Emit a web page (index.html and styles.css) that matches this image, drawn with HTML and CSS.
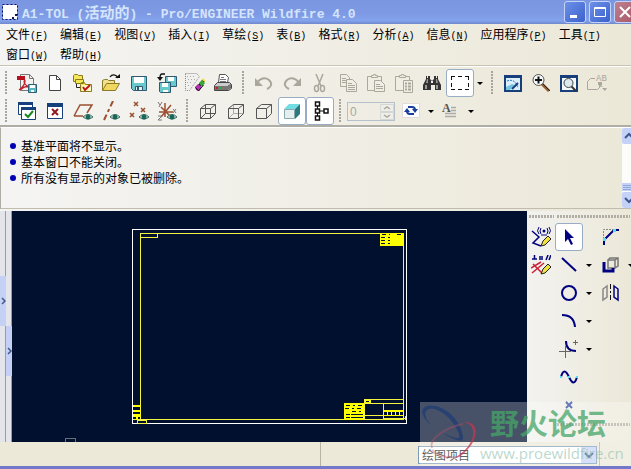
FILE: index.html
```html
<!DOCTYPE html>
<html lang="zh-CN">
<head>
    <meta charset="UTF-8">
    <meta name="viewport" content="width=device-width, initial-scale=1.0">
    <title>A1-TOL (活动的) - Pro/ENGINEER Wildfire 4.0</title>
    <link rel="stylesheet" href="styles.css">
</head>
<body>

<header class="titlebar">
    <svg class="app-icon" width="16" height="16" viewBox="0 0 16 16"><path fill="#fff" d="M1 1h14v14H1z"/><path fill="none" stroke="#101060" stroke-dasharray="2 2" d="M.5.5h15v15H.5z"/><path fill="#101060" d="M10 13h2v2h-2zM13 10h2v2h-2z"/></svg>
    <h1><span class="mono">A1-TOL (</span>活动的<span class="mono">) - Pro/ENGINEER Wildfire 4.0</span></h1>
    <div class="window-buttons">
        <button type="button" aria-label="最小化"><svg width="20" height="20" viewBox="0 0 20 20"><path fill="#fff" d="M5 13h7v3H5z"/></svg></button>
        <button type="button" aria-label="最大化"><svg width="20" height="20" viewBox="0 0 20 20"><path fill="none" stroke="#fff" d="M4.500 5.500h11v9h-11zM4.500 6.500h11"/></svg></button>
        <button type="button" class="close" aria-label="关闭"><svg width="20" height="20" viewBox="0 0 20 20"><path fill="none" stroke="#fff" stroke-width="2" d="M5 5l10 10M15 5L5 15"/></svg></button>
    </div>
</header>

<nav class="menubar">
    <a href="#">文件<span>(<u>F</u>)</span></a>
    <a href="#">编辑<span>(<u>E</u>)</span></a>
    <a href="#">视图<span>(<u>V</u>)</span></a>
    <a href="#">插入<span>(<u>I</u>)</span></a>
    <a href="#">草绘<span>(<u>S</u>)</span></a>
    <a href="#">表<span>(<u>B</u>)</span></a>
    <a href="#">格式<span>(<u>R</u>)</span></a>
    <a href="#">分析<span>(<u>A</u>)</span></a>
    <a href="#">信息<span>(<u>N</u>)</span></a>
    <a href="#">应用程序<span>(<u>P</u>)</span></a>
    <a href="#">工具<span>(<u>T</u>)</span></a>
    <a href="#">窗口<span>(<u>W</u>)</span></a>
    <a href="#">帮助<span>(<u>H</u>)</span></a>
</nav>

<div class="toolbars">
    <div class="toolbar">
        <i class="grip"></i>
        <button type="button" class="tool" aria-label="PDF"><svg viewBox="0 0 20 20"><path fill="#f4f0f0" stroke="#777" d="M3.500 1.500h9l4 4v12h-13z"/><path fill="none" stroke="#777" d="M12.500 1.500v4h4"/><path fill="#b8101c" d="M0 3h8v4H0z"/><path fill="none" stroke="#c02028" stroke-width="1.300" d="M2 17c4-3 6-7 6-9s-2 0 0 3 5 3 7 2-7-1-12 4"/><path fill="#58b8c0" stroke="#2c6074" d="M11.500 11.500h8v8h-8z"/><path fill="#fff" d="M13 12h5v3h-5zM14 17h3v2h-3z"/></svg></button>
        <button type="button" class="tool" aria-label="新建"><svg viewBox="0 0 20 20"><path fill="#fff" stroke="#444" d="M4.500 2.500h7l4 4v11h-11z"/><path fill="none" stroke="#444" d="M11.500 2.500v4h4"/></svg></button>
        <button type="button" class="tool" aria-label="设置工作目录"><svg viewBox="0 0 20 20"><path fill="#f4e858" stroke="#8a7a18" d="M.5 2.500l1-1h3l1 1h4v6h-9z"/><path fill="none" stroke="#222" d="M3.500 9v5.500h4"/><path fill="#f4e858" stroke="#8a7a18" d="M2.500 6.500h8v4h-8zM7.500 11.500l1-2h3l1 2h6v7h-11z"/><path fill="#fff8c0" d="M9 12h9v6H9z"/><path fill="none" stroke="#c01818" stroke-width="2" d="M10 14l2 3 5-5"/></svg></button>
        <button type="button" class="tool" aria-label="打开"><svg viewBox="0 0 20 20"><path fill="#f0e090" stroke="#8a7a28" d="M1.500 17.500v-10l2-1h3l1 1h6v3"/><path fill="#f0d860" stroke="#8a7a28" d="M1.500 17.500l4-7h13l-4 7z"/><path fill="none" stroke="#111" stroke-width="1.300" d="M9 4c2-3 6-3 8 1"/><path fill="#111" d="M14 5h5V1z"/></svg></button>
        <button type="button" class="tool" aria-label="保存"><svg viewBox="0 0 20 20"><path fill="#68c8cc" stroke="#305870" d="M2.500 3.500h15v14h-13l-2-2z"/><path fill="#fff" d="M5 4h10v6H5z"/><path fill="#e8f4f4" stroke="#305870" d="M6.500 13.500h7v4h-7z"/><path fill="#305870" d="M8 14h2v3H8z"/></svg></button>
        <button type="button" class="tool" aria-label="保存副本"><svg viewBox="0 0 20 20"><path fill="#68c8cc" stroke="#305870" d="M8.500 3.500h11v10h-11z"/><path fill="#fff" d="M11 4h6v4h-6z"/><path fill="#68c8cc" stroke="#305870" d="M2.500 9.500h11v10h-10l-1-1z"/><path fill="#fff" d="M5 10h6v4H5zM6 17h5v2H6z"/><path fill="none" stroke="#111" stroke-width="1.300" d="M8 1H5Q3 1 3 5"/><path fill="#111" d="M0 4h6L3 8z"/></svg></button>
        <button type="button" class="tool" aria-label="拭除"><svg viewBox="0 0 20 20"><path fill="#f0f0ee" stroke="#888" stroke-dasharray="1 1" d="M.5.500h11l3 3-10 14h-4z"/><path stroke="#aaa" stroke-dasharray="1 2" d="M2 3.500h9M3 6.500h7M2 9.500h6M3 12.500h3"/><path fill="#111" d="M13 12l5-6 2 2-6 7z"/><path fill="#b030b0" d="M10 14l3-3 4 3-3 4-3-1z"/><path fill="#38a838" d="M14 10l3-3 3 3-3 4z"/><path fill="#f4e840" d="M17 7l1-2 2 2v2z"/><path fill="none" stroke="#111" d="M10.500 14.500l3 3.500 5-6"/></svg></button>
        <button type="button" class="tool" aria-label="打印"><svg viewBox="0 0 20 20"><path fill="#fff" stroke="#555" d="M5.500 9.500l1-8h6l3 3-1 5z"/><path stroke="#777" d="M8 4.500h3M7 6.500h6M7 8.500h6"/><path fill="#ccc" stroke="#444" d="M1.500 12.500l3-3h12l2 2v4l-3 2h-14z"/><path fill="#777" d="M2 13h13v4H2zM15 12l3-1v4l-3 2z"/><path fill="#d02020" d="M3 14h2v2H3z"/><path fill="#30b030" d="M6 14h2v2H6z"/></svg></button>
        <i class="grip"></i>
        <button type="button" class="tool" aria-label="撤消" disabled><svg viewBox="0 0 20 20"><path fill="none" stroke="#aaa79c" stroke-width="2" d="M3 10c3-5 8-6 12-3 4 4 2 7-2 9"/><path fill="#aaa79c" d="M1 5v8h8z"/></svg></button>
        <button type="button" class="tool" aria-label="重做" disabled><svg viewBox="0 0 20 20"><path fill="none" stroke="#aaa79c" stroke-width="2" d="M17 10C14 5 9 4 5 7c-4 4-2 7 2 9"/><path fill="#aaa79c" d="M19 5v8h-8z"/></svg></button>
        <button type="button" class="tool" aria-label="剪切" disabled><svg viewBox="0 0 20 20"><path fill="none" stroke="#aaa79c" stroke-width="1.500" d="M6 1l5 12M13 1L8 13"/><ellipse cx="6.500" cy="15.500" rx="2" ry="3" fill="none" stroke="#aaa79c" stroke-width="1.500"/><ellipse cx="12.500" cy="15.500" rx="2" ry="3" fill="none" stroke="#aaa79c" stroke-width="1.500"/></svg></button>
        <button type="button" class="tool" aria-label="复制" disabled><svg viewBox="0 0 20 20"><path fill="#efede4" stroke="#aaa79c" d="M2.500 1.500h6l3 3v9h-9z"/><path stroke="#aaa79c" d="M4 5.500h4M4 7.500h5M4 9.500h5"/><path fill="#efede4" stroke="#aaa79c" d="M8.500 6.500h6l4 4v8h-10z"/><path stroke="#aaa79c" d="M10 10.500h4M10 12.500h7M10 14.500h7M10 16.500h7"/></svg></button>
        <button type="button" class="tool" aria-label="粘贴" disabled><svg viewBox="0 0 20 20"><path fill="#efede4" stroke="#aaa79c" d="M1.500 3.500h14v14h-14z"/><path fill="#efede4" stroke="#aaa79c" d="M5.500 4.500v-2h2v-1h2v1h2v2z"/><path fill="#efede4" stroke="#aaa79c" d="M8.500 7.500h6l4 4v7h-10z"/><path stroke="#aaa79c" d="M10 11.500h4M10 13.500h7M10 15.500h7"/></svg></button>
        <button type="button" class="tool" aria-label="选择性粘贴" disabled><svg viewBox="0 0 20 20"><path fill="#efede4" stroke="#aaa79c" d="M1.500 3.500h14v14h-14z"/><path fill="#efede4" stroke="#aaa79c" d="M5.500 4.500v-2h2v-1h2v1h2v2z"/><path fill="#efede4" stroke="#aaa79c" d="M9.500 7.500h9v12h-9z"/><path stroke="#aaa79c" stroke-width="2" d="M11 10.500h2M14 10.500h3M11 13.500h2M14 13.500h3M11 16.500h2M14 16.500h3"/></svg></button>
        <button type="button" class="tool" aria-label="查找"><svg viewBox="0 0 20 20"><path fill="#333" d="M4 3h4v3l2 2 2-2V3h4v3l3 6v5h-6v-5h-4v5H1v-5l3-6z"/><path fill="#999" d="M5 6h1v4H4zM14 6h1l1 4h-2zM3 12h2v4H3zM14 12h2v4h-2z"/><path fill="#eee" d="M5 3h1v2H5zM14 3h1v2h-1zM9 8h2v2H9z"/></svg></button>
        <button type="button" class="tool active" aria-label="选取"><svg viewBox="0 0 20 20"><path fill="none" stroke="#111" stroke-dasharray="4 3" d="M1 3.500h18M1 16.500h18M1.500 3v14M18.500 3v14"/></svg></button>
        <button type="button" class="drop" aria-label="选取选项"></button>
        <i class="grip"></i>
        <button type="button" class="tool" aria-label="重画"><svg viewBox="0 0 20 20"><path fill="#dceefa" stroke="#173f7b" stroke-width="2" d="M2 3h16v15H2z"/><path fill="#173f7b" d="M1 2h18v3H1z"/><path fill="#74c4e4" d="M3 14l6-3 3 1-5 5H3z"/><path fill="none" stroke="#2080c0" stroke-dasharray="2 1" d="M4 8c5-2 9 0 11 7"/><path fill="none" stroke="#173f7b" stroke-width="2" d="M9 16l6-6"/></svg></button>
        <button type="button" class="tool" aria-label="放大"><svg viewBox="0 0 20 20"><path stroke="#96602c" stroke-width="3" d="M11 11l7 7"/><path stroke="#222" d="M12 11l7 7"/><circle cx="7.500" cy="7" r="5.500" fill="#f4f8f8" stroke="#555"/><path stroke="#111" stroke-width="2" d="M4 7h7M7.500 3.500v7"/></svg></button>
        <button type="button" class="tool" aria-label="重新调整"><svg viewBox="0 0 20 20"><path fill="#f4f8fa" stroke="#173f7b" stroke-width="2" d="M2 3h16v15H2z"/><path fill="#173f7b" d="M1 2h18v3H1z"/><path stroke="#333" stroke-width="2" d="M12 13l5 5"/><circle cx="9.500" cy="10" r="4.500" fill="#dceaf0" stroke="#444"/></svg></button>
        <button type="button" class="tool" aria-label="保存的视图" disabled><svg viewBox="0 0 20 20"><path fill="none" stroke="#aaa79c" d="M8 5.500H3.500l-3 3v8h10l3-3V11M12.500 9v5M15.500 14l-2-2"/><path fill="#aaa79c" d="M11 9h4v3h-4zM15 15h5l-2 3z"/><text x="9" y="8" font-family="Liberation Mono" font-size="9" fill="#aaa79c">AB</text></svg></button>
    </div>
    <div class="toolbar">
        <i class="grip"></i>
        <button type="button" class="tool" aria-label="激活窗口"><svg viewBox="0 0 20 20"><path fill="#fff" stroke="#173f7b" d="M1.500 1.500h14v12h-14z"/><path fill="#173f7b" d="M1 1h15v3H1z"/><path fill="#fff" stroke="#173f7b" d="M4.500 6.500h14v12h-14z"/><path fill="#173f7b" d="M4 6h15v3H4z"/><path fill="none" stroke="#188820" stroke-width="2" d="M8 13l3 3 5-6"/></svg></button>
        <button type="button" class="tool" aria-label="关闭窗口"><svg viewBox="0 0 20 20"><path fill="#fff" stroke="#173f7b" d="M2.500 2.500h15v15h-15z"/><path fill="#173f7b" d="M2 2h16v4H2z"/><path fill="none" stroke="#901820" stroke-width="2" d="M7 8l6 6M13 8l-6 6"/></svg></button>
        <button type="button" class="tool" aria-label="基准平面"><svg viewBox="0 0 20 20"><path fill="none" stroke="#9a5030" stroke-width="1.500" d="M1 15L7 4h12l-5 8M1 15h9"/><path fill="#dce8e4" stroke="#386860" d="M10 16q5-5 10 0-5 4-10 0z"/><circle cx="15" cy="16" r="2.500" fill="#186858"/></svg></button>
        <button type="button" class="tool" aria-label="基准轴"><svg viewBox="0 0 20 20"><path fill="none" stroke="#9a5030" stroke-width="2" stroke-dasharray="6 3 3 3" d="M12 0L3 19"/><path fill="#dce8e4" stroke="#386860" d="M9 16q5-5 10 0-5 4-10 0z"/><circle cx="14" cy="16" r="2.500" fill="#186858"/></svg></button>
        <button type="button" class="tool" aria-label="基准点"><svg viewBox="0 0 20 20"><path fill="none" stroke="#9a5030" stroke-width="1.500" d="M5 1l4 4M9 1L5 5M1 12l4 4M5 12l-4 4M12 7l4 4M16 7l-4 4"/><path fill="#dce8e4" stroke="#386860" d="M10 16q5-5 10 0-5 4-10 0z"/><circle cx="15" cy="16" r="2.500" fill="#186858"/></svg></button>
        <button type="button" class="tool" aria-label="坐标系"><svg viewBox="0 0 20 20"><path fill="none" stroke="#9a5030" stroke-width="1.500" d="M8 2v14M2 11h14M4 6l10 10M14 4L4 16"/><path fill="none" stroke="#777" d="M1 1l2 3M5 1L2 6M16 8l3 4M19 8l-3 4M1 15h4l-4 4h4"/><path fill="#dce8e4" stroke="#386860" d="M10 16q5-5 10 0-5 4-10 0z"/><circle cx="15" cy="16" r="2.500" fill="#186858"/></svg></button>
        <i class="grip"></i>
        <button type="button" class="tool" aria-label="线框"><svg viewBox="0 0 20 20"><path fill="none" stroke="#555" d="M2.500 7.500h10v10h-10zM7.500 3.500h10v9h-10zM2.500 7.500l5-4M12.500 7.500l5-4M12.500 17.500l5-5M2.500 17.500l5-5"/></svg></button>
        <button type="button" class="tool" aria-label="隐藏线"><svg viewBox="0 0 20 20"><path fill="none" stroke="#aaa" d="M7.500 3.500v9h10M2.500 17.500l5-5"/><path fill="none" stroke="#555" d="M2.500 7.500h10v10h-10zM2.500 7.500l5-4h10v9l-5 5M12.500 7.500l5-4"/></svg></button>
        <button type="button" class="tool" aria-label="无隐藏线"><svg viewBox="0 0 20 20"><path fill="none" stroke="#555" d="M2.500 7.500h10v10h-10zM2.500 7.500l5-4h10v9l-5 5M12.500 7.500l5-4"/></svg></button>
        <button type="button" class="tool active" aria-label="着色"><svg viewBox="0 0 20 20"><path fill="#e4eeee" stroke="#8aa" d="M2.500 8.500h10v9h-10z"/><path fill="#70dce4" d="M2 8l5-5h11l-5 5z"/><path fill="#2c7880" d="M13 8l5-5v10l-5 5z"/></svg></button>
        <button type="button" class="tool active" aria-label="模型树"><svg viewBox="0 0 20 20"><path stroke="#111" d="M7.500 5v3M7.500 12v3M10 10h4"/><path fill="#fff" stroke="#111" stroke-width="1.500" d="M5.500 1h4v4h-4zM5.500 8h4v4h-4zM5.500 15h4v4h-4zM14 8h4v4h-4z"/></svg></button>
        <i class="grip"></i>
        <label class="spinner">
            <input type="number" value="0" aria-label="页面" disabled>
            <svg width="14" height="16" viewBox="0 0 14 16"><path fill="#efeee6" stroke="#d4d8d4" d="M.5.500h13v7H.5zM.5 8.500h13v7H.5z"/><path fill="none" stroke="#a8a8a0" stroke-width="1.500" d="M4 5l3-2 3 2M4 11l3 2 3-2"/></svg>
        </label>
        <button type="button" class="tool" aria-label="更新"><svg viewBox="0 0 20 20"><path fill="#fff" stroke="#ddd" d="M1.500 2.500h17v14h-17z"/><path fill="none" stroke="#173f9b" stroke-width="2" d="M7 6h4q3 0 3 3M13 13H9q-3 0-3-3"/><path fill="#173f9b" d="M11 8h6l-3 4zM3 11h6L6 7z"/></svg></button>
        <button type="button" class="drop" aria-label="更新选项"></button>
        <button type="button" class="tool" aria-label="文本样式" disabled><svg viewBox="0 0 20 20"><text x="1" y="11" font-family="Liberation Serif" font-size="12" font-weight="bold" fill="#555">A</text><path stroke="#aaa" stroke-width="1.500" d="M10 6.500h5M10 9.500h5M4 12.500h11M4 15.500h11"/></svg></button>
        <button type="button" class="drop" aria-label="文本样式选项"></button>
    </div>
</div>

<section class="messages">
    <ul>
        <li>基准平面将不显示。</li>
        <li>基本窗口不能关闭。</li>
        <li>所有没有显示的对象已被删除。</li>
    </ul>
    <div class="scrollbar">
        <button type="button" aria-label="向上"><svg width="16" height="16" viewBox="0 0 16 16"><path fill="none" stroke="#40588c" stroke-width="2" d="M3 10l4-4 4 4"/></svg></button>
        <i class="thumb"></i>
        <button type="button" aria-label="向下"><svg width="16" height="16" viewBox="0 0 16 16"><path fill="none" stroke="#40588c" stroke-width="2" d="M3 6l4 4 4-4"/></svg></button>
    </div>
</section>

<main class="workspace">
    <div class="splitter first"><button type="button" aria-label="展开导航器"><svg width="5" height="8" viewBox="0 0 5 8"><path fill="none" stroke="#40588c" stroke-width="1.500" d="M1 1l3 3-3 3"/></svg></button></div>
    <div class="splitter second"><button type="button" aria-label="展开浏览器"><svg width="5" height="8" viewBox="0 0 5 8"><path fill="none" stroke="#40588c" stroke-width="1.500" d="M1 1l3 3-3 3"/></svg></button></div>
    <div class="canvas">
        <svg viewBox="0 0 515 231" preserveAspectRatio="xMidYMid meet" shape-rendering="crispEdges" role="img" aria-label="A1">
            <!-- sheet border and frame -->
            <path fill="none" stroke="#fff" d="M120.500 18.500h274v194h-274z"/>
            <g fill="none" stroke="#f4f440">
                <path d="M128.500 22.500h263v186h-263zM128.500 22.500h17v4h-17z"/>
                <path d="M125.500 209.500h9v3h-9zM121 208.500h8"/>
                <!-- title block -->
                <path d="M352.500 188.500h39v20h-39zM352.500 192.500h39M358.500 189v3M371.500 192v16M352.500 204.500h39M372 207.500h22M393.500 205v4"/>
            </g>
            <path fill="#ff0" d="M368 22h24v13h-24zM121 194h8v2h-8zM121 199h8v2h-8zM121 203h8v3h-8zM332 192h20v17h-20zM371 199h21v6h-21zM353 189h6v3h-6zM124 206h2v3h-2z"/>
            <path stroke="#00102e" stroke-dasharray="4 3 2 3" d="M370 23.500h8M385 23.500h6M369 26.500h10M369 29.500h10M369 32.500h10M334 194.500h18M333 197.500h18M340 200.500h12M334 203.500h17M334 206.500h17"/>
            <path stroke="#00102e" stroke-width="3" stroke-dasharray="3 1" d="M372 202.500h19"/>
            <path stroke="#00102e" d="M354 190.500h3M339 203.500h12M339 206.500h12"/>
            <path fill="none" stroke="#687078" d="M53.500 227.500h10v4h-10z"/>
        </svg>
    </div>
    <aside class="palette">
        <i class="grip-h"></i><i class="grip-h wide"></i>
        <div class="column">
            <button type="button" class="tool" aria-label="草绘参照"><svg viewBox="0 0 20 20"><path fill="none" stroke="#000080" stroke-width="1.500" d="M1 4l7 6-6 6 8 3"/><circle cx="13" cy="4" r="1.500" fill="#000080"/><path fill="none" stroke="#000080" d="M10 1q-2 3 0 6M16 1q2 3 0 6M8 0q-3 4 0 7M18 0q3 4 0 7M10 8h6"/><path fill="#f0e040" stroke="#222" d="M12 14l5-5 3 3-6 6-4 1z"/></svg></button>
            <button type="button" class="tool" aria-label="草绘约束"><svg viewBox="0 0 20 20"><path fill="none" stroke="#000080" stroke-width="1.500" d="M1 4h5M3.500 0v4M8 2h4M8 4h4M15 5l2-5M18 5l2-5"/><path fill="none" stroke="#c82038" stroke-width="1.500" d="M0 13L10 7M1 18L13 8M2 9l9 9"/><path fill="#f0e040" stroke="#222" d="M12 14l5-5 3 3-6 6-4 1z"/></svg></button>
        </div>
        <div class="column">
            <div class="entry"><button type="button" class="tool active" aria-label="选择"><svg viewBox="0 0 20 20"><path fill="#000080" d="M6 2v13l3-3 3 6 2-1-3-6h4z"/></svg></button></div>
            <div class="entry"><button type="button" class="tool" aria-label="线"><svg viewBox="0 0 20 20"><path stroke="#000080" stroke-width="2" d="M3 3l14 13"/></svg></button><button type="button" class="drop" aria-label="线选项"></button></div>
            <div class="entry"><button type="button" class="tool" aria-label="圆"><svg viewBox="0 0 20 20"><circle cx="10" cy="10" r="7" fill="none" stroke="#000080" stroke-width="2"/></svg></button><button type="button" class="drop" aria-label="圆选项"></button></div>
            <div class="entry"><button type="button" class="tool" aria-label="弧"><svg viewBox="0 0 20 20"><path fill="none" stroke="#000080" stroke-width="2" d="M3 4q12 0 13 12"/></svg></button><button type="button" class="drop" aria-label="弧选项"></button></div>
            <div class="entry"><button type="button" class="tool" aria-label="圆角"><svg viewBox="0 0 20 20"><path fill="none" stroke="#000080" stroke-width="2" d="M7 2q0 10 10 10"/><path stroke="#666" d="M0 12.500h12M6.500 7v12M14 3.500h5M16.500 1v5"/></svg></button><button type="button" class="drop" aria-label="圆角选项"></button></div>
            <div class="entry"><button type="button" class="tool" aria-label="样条"><svg viewBox="0 0 20 20"><path fill="none" stroke="#000080" stroke-width="2" d="M2 10q3-11 8 0t8 0"/><path fill="#50e0f0" d="M1 9h2v2H1zM9 9h2v2H9zM17 9h2v2h-2z"/></svg></button></div>
            <div class="entry"><button type="button" class="tool" aria-label="点"><svg viewBox="0 0 20 20"><path fill="none" stroke="#2c449c" stroke-width="2" d="M7 7l6 6M13 7l-6 6"/></svg></button></div>
        </div>
        <div class="column">
            <div class="entry"><button type="button" class="tool" aria-label="倒角"><svg viewBox="0 0 20 20"><path fill="none" stroke="#888" stroke-dasharray="2 1" d="M2.500 12V2.500H13"/><path fill="none" stroke="#000080" stroke-width="2" d="M3 18v-5L13 3h5"/><path fill="#50e0f0" d="M2 11h3v3H2zM12 2h3v3h-3z"/></svg></button></div>
            <div class="entry"><button type="button" class="tool" aria-label="使用边"><svg viewBox="0 0 20 20"><path fill="none" stroke="#777" stroke-width="1.500" d="M7 5h7v8H7zM7 5l2-2h8v8l-3 2M14 5l3-2"/><path fill="none" stroke="#000080" stroke-width="3" d="M3 7v9h9v-3"/></svg></button><button type="button" class="drop" aria-label="使用边选项"></button></div>
            <div class="entry"><button type="button" class="tool" aria-label="镜像"><svg viewBox="0 0 20 20"><path fill="none" stroke="#888" stroke-width="1.500" d="M2 6l4-3v11l-4 3z"/><path stroke="#111" stroke-dasharray="5 2 2 2" d="M9.500 1v18"/><path fill="none" stroke="#000080" stroke-width="1.500" d="M13 3l4 3v11l-4-3z"/></svg></button></div>
        </div>
        <i class="grip-h wide"></i>
    </aside>
</main>

<footer class="statusbar">
    <div class="pane"></div>
    <div class="pane filter">
        <div class="select-box">
            <select aria-label="过滤器"><option>绘图项目</option></select>
            <svg width="15" height="16" viewBox="0 0 15 16"><path fill="#c6d4f8" d="M0 0h15v16H0z"/><path fill="none" stroke="#40588c" stroke-width="2" d="M4 6l4 4 4-4"/></svg>
        </div>
    </div>
</footer>

<div class="watermark">
    <svg width="60" height="60" viewBox="0 0 60 60">
        <path fill="#203c74" fill-rule="evenodd" d="M5 5C16-1 40 12 43 35 44 41 36 39 26 33 10 25-4 11 5 5zM7 8C1 14 12 27 25 32 36 37 41 38 39 32 33 15 15 3 7 8z"/>
        <path fill="#c03850" d="M43 20c14-1 15 10 10 20-5 9-14 17-19 16 10-5 20-16 19-26 0-6-4-9-10-10z"/>
        <path fill="none" stroke="#b85068" stroke-opacity=".5" stroke-width="2" d="M43 22C28 25 8 36 12 46M12 48q8 9 25 7"/>
    </svg>
    <div class="watermark-text">
        <strong>野火论坛</strong>
        <span>www.proewildfire.cn</span>
    </div>
</div>

</body>
</html>
```

FILE: styles.css
```css
* {
    box-sizing: border-box;
}

body {
    position: relative;
    display: flex;
    flex-direction: column;
    min-height: 100vh;
    margin: 0;
    overflow: hidden;
    font-family: 'Noto Sans CJK SC', sans-serif;
    font-size: 12px;
    color: #000;
    background: linear-gradient(to right, #f4f4f3, #ece8d8);
    border-bottom: 3px solid #7478c8;
}

button {
    flex: none;
    padding: 0;
    border: 0;
    background: none;
}

svg {
    display: block;
    flex: none;
}

.titlebar {
    display: flex;
    align-items: center;
    gap: 4px;
    height: 24px;
    padding-left: 2px;
    background: linear-gradient(#7a96e0 0%, #7e9ae4 60%, #84a4ee 85%, #7088cc 100%);
}

.titlebar h1 {
    flex: 1;
    margin: 0;
    font-size: 15px;
    line-height: 24px;
    font-weight: bold;
    color: #d4e4fc;
    white-space: nowrap;
}

.mono {
    font-family: 'Liberation Mono', monospace;
    font-size: 13px;
    line-height: 1;
}

.window-buttons {
    display: flex;
    gap: 3px;
    margin-right: -5px;
}

.window-buttons button {
    border: 1px solid #c4d4f8;
    border-radius: 3px;
    background: linear-gradient(135deg, #6c90e8, #3c62cc);
}

.window-buttons .close {
    background: linear-gradient(135deg, #c08090, #a85868);
}

.menubar {
    display: flex;
    flex-wrap: wrap;
    column-gap: 12px;
    padding: 0 6px 1px;
    border-bottom: 1px solid #c8c4b4;
}

.menubar a {
    color: #000;
    line-height: 20px;
    text-decoration: none;
    white-space: nowrap;
}

.menubar span {
    font-family: 'Liberation Mono', monospace;
    font-size: 10px;
    line-height: 1;
}

.toolbars {
    padding-top: 2px;
    border-top: 1px solid #fff;
    border-bottom: 2px solid #b0aea4;
}

.toolbar {
    display: flex;
    height: 28px;
}

.grip {
    flex: none;
    width: 3px;
    margin: 2px 5px;
    background: repeating-linear-gradient(#a8a69c 0 2px, transparent 2px 3px);
    background-size: 2px 100%;
    background-repeat: no-repeat;
}

.tool {
    display: flex;
    align-items: center;
    justify-content: center;
    width: 28px;
    height: 28px;
}

.tool svg {
    width: 20px;
    height: 20px;
}

.tool.active {
    border: 1px solid #98acc4;
    border-radius: 3px;
    background: #fff;
}

.drop {
    display: flex;
    align-items: center;
    justify-content: center;
    width: 12px;
    height: 28px;
}

.drop::after {
    content: "";
    border: 3px solid transparent;
    border-top-color: #000;
    border-bottom: 0;
}

.spinner {
    display: flex;
    align-items: center;
    width: 48px;
    height: 19px;
    margin: 5px 2px 4px 0;
    border: 1px solid #b4c0cc;
}

.spinner input {
    flex: 1;
    min-width: 0;
    padding: 0 2px;
    border: 0;
    background: none;
    font: 12px 'Liberation Sans', sans-serif;
    color: #a8a8a0;
    appearance: textfield;
}

.messages {
    display: flex;
    height: 82px;
    border-top: 1px solid #fff;
    border-bottom: 1px solid #c0bcb0;
    border-left: 1px solid #b0aea4;
}

.messages ul {
    flex: 1;
    margin: 0;
    padding: 10px 9px;
    list-style: none;
}

.messages li {
    display: flex;
    align-items: center;
    gap: 5px;
    line-height: 16px;
}

.messages li::before {
    content: "";
    width: 6px;
    height: 6px;
    border-radius: 50%;
    background: #0000b4;
}

.scrollbar {
    display: flex;
    flex-direction: column;
    width: 9px;
    background: #fcfcfa;
    overflow: hidden;
}

.scrollbar button {
    width: 16px;
    border-radius: 2px;
    background: #c4d2f8;
}

.thumb {
    width: 16px;
    height: 8px;
    margin: auto 0 1px;
    border: 1px solid #c4d2f8;
    background: repeating-linear-gradient(#c4d2f8 0 1px, #90a8dc 1px 2px);
}

.workspace {
    display: flex;
    flex: 1;
    margin-top: 2px;
}

.splitter {
    width: 6px;
    border-right: 1px solid #8c9cc4;
    background: #e4e5ea;
}

.splitter button {
    display: flex;
    align-items: center;
    justify-content: center;
    width: 6px;
    height: 50px;
    margin-top: 65px;
    background: #c4d0f4;
}

.splitter.second button {
    margin-top: 115px;
}

.canvas {
    flex: 1;
    display: grid;
    background: #00102e;
}

.canvas svg {
    width: 100%;
    height: 100%;
}

.palette {
    display: grid;
    grid-template-columns: 28px 42px 34px;
    grid-template-rows: 12px auto 1fr;
    overflow: hidden;
    background: linear-gradient(to right, #f2f2ef, #ece8d8);
}

.grip-h {
    height: 3px;
    margin: 4px 1px 0 2px;
    background: repeating-linear-gradient(to right, #b0aea4 0 2px, transparent 2px 3px);
}

.grip-h.wide {
    grid-column: 2 / 4;
}

.entry {
    display: flex;
}

.statusbar {
    display: flex;
    height: 24px;
    background: #ece9d8;
}

.pane {
    flex: 1;
    border-right: 1px solid #b8b4a4;
}

.filter {
    display: flex;
    flex: 0 0 279px;
    justify-content: flex-end;
    margin-right: 31px;
    padding: 4px 2px 2px;
}

.select-box {
    position: relative;
    width: 179px;
    height: 18px;
}

.select-box select {
    width: 100%;
    height: 100%;
    padding: 0 18px 0 3px;
    border: 1px solid #7f9db9;
    background: #fff;
    font: 12px 'Noto Sans CJK SC', sans-serif;
    line-height: 16px;
    color: #222;
    appearance: none;
}

.select-box svg {
    position: absolute;
    top: 1px;
    right: 1px;
    pointer-events: none;
}

/* forum stamp over the lower right corner */
.watermark {
    position: absolute;
    right: 0;
    bottom: 0;
    display: flex;
    width: 211px;
    height: 64px;
    background: rgba(255, 255, 255, 0.28);
    pointer-events: none;
}

.watermark svg {
    opacity: 0.75;
}

.watermark-text {
    display: flex;
    flex-direction: column;
    white-space: nowrap;
}

.watermark strong {
    padding-left: 10px;
    font-size: 29px;
    line-height: 40px;
    font-weight: bold;
    color: rgba(70, 165, 105, 0.75);
}

.watermark span {
    font-family: 'Open Sans', sans-serif;
    font-size: 15px;
    line-height: 22px;
    color: rgba(140, 190, 170, 0.6);
}
```
